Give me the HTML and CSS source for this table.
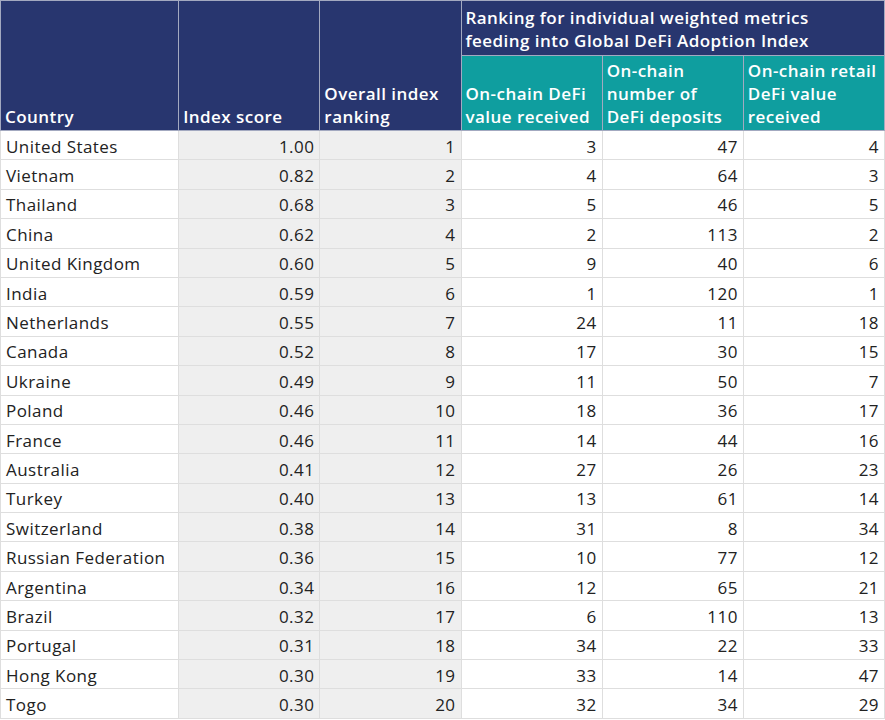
FILE: index.html
```html
<!DOCTYPE html>
<html>
<head>
<meta charset="utf-8">
<link rel="stylesheet" href="styles.css">
</head>
<body>
<table class="defi">
  <colgroup>
    <col class="c-country">
    <col class="c-num"><col class="c-num"><col class="c-num"><col class="c-num"><col class="c-num">
  </colgroup>
  <thead>
    <tr class="h1">
      <th rowspan="2" class="navy left">Country</th>
      <th rowspan="2" class="navy left">Index score</th>
      <th rowspan="2" class="navy left">Overall index<br>ranking</th>
      <th colspan="3" class="navy group">Ranking for individual weighted metrics<br>feeding into Global DeFi Adoption Index</th>
    </tr>
    <tr class="h2">
      <th class="teal">On-chain DeFi<br>value received</th>
      <th class="teal">On-chain<br>number of<br>DeFi deposits</th>
      <th class="teal">On-chain retail<br>DeFi value<br>received</th>
    </tr>
  </thead>
  <tbody>
    <tr><td>United States</td><td class="g">1.00</td><td class="g">1</td><td>3</td><td>47</td><td>4</td></tr>
    <tr><td>Vietnam</td><td class="g">0.82</td><td class="g">2</td><td>4</td><td>64</td><td>3</td></tr>
    <tr><td>Thailand</td><td class="g">0.68</td><td class="g">3</td><td>5</td><td>46</td><td>5</td></tr>
    <tr><td>China</td><td class="g">0.62</td><td class="g">4</td><td>2</td><td>113</td><td>2</td></tr>
    <tr><td>United Kingdom</td><td class="g">0.60</td><td class="g">5</td><td>9</td><td>40</td><td>6</td></tr>
    <tr><td>India</td><td class="g">0.59</td><td class="g">6</td><td>1</td><td>120</td><td>1</td></tr>
    <tr><td>Netherlands</td><td class="g">0.55</td><td class="g">7</td><td>24</td><td>11</td><td>18</td></tr>
    <tr><td>Canada</td><td class="g">0.52</td><td class="g">8</td><td>17</td><td>30</td><td>15</td></tr>
    <tr><td>Ukraine</td><td class="g">0.49</td><td class="g">9</td><td>11</td><td>50</td><td>7</td></tr>
    <tr><td>Poland</td><td class="g">0.46</td><td class="g">10</td><td>18</td><td>36</td><td>17</td></tr>
    <tr><td>France</td><td class="g">0.46</td><td class="g">11</td><td>14</td><td>44</td><td>16</td></tr>
    <tr><td>Australia</td><td class="g">0.41</td><td class="g">12</td><td>27</td><td>26</td><td>23</td></tr>
    <tr><td>Turkey</td><td class="g">0.40</td><td class="g">13</td><td>13</td><td>61</td><td>14</td></tr>
    <tr><td>Switzerland</td><td class="g">0.38</td><td class="g">14</td><td>31</td><td>8</td><td>34</td></tr>
    <tr><td>Russian Federation</td><td class="g">0.36</td><td class="g">15</td><td>10</td><td>77</td><td>12</td></tr>
    <tr><td>Argentina</td><td class="g">0.34</td><td class="g">16</td><td>12</td><td>65</td><td>21</td></tr>
    <tr><td>Brazil</td><td class="g">0.32</td><td class="g">17</td><td>6</td><td>110</td><td>13</td></tr>
    <tr><td>Portugal</td><td class="g">0.31</td><td class="g">18</td><td>34</td><td>22</td><td>33</td></tr>
    <tr><td>Hong Kong</td><td class="g">0.30</td><td class="g">19</td><td>33</td><td>14</td><td>47</td></tr>
    <tr><td>Togo</td><td class="g">0.30</td><td class="g">20</td><td>32</td><td>34</td><td>29</td></tr>
  </tbody>
</table>
</body>
</html>
```

FILE: styles.css
```css
html, body {
  margin: 0;
  padding: 0;
  background: #ffffff;
}

.defi {
  border-collapse: collapse;
  table-layout: fixed;
  width: 885px;
  font-family: "Open Sans", "Noto Sans", sans-serif;
  font-size: 17px;
  letter-spacing: 0.45px;
  color: #222222;
}

.c-country { width: 178px; }
.c-num { width: 141px; }

.defi th {
  font-weight: 600;
  color: #ffffff;
  text-align: left;
  vertical-align: bottom;
  line-height: 23px;
  padding: 0 2px 2px 4px;
  border: 1px solid #a3a9c0;
  white-space: nowrap;
  overflow: hidden;
}

.navy { background: #28366f; }
.teal { background: #0f9e9f; }

.h1 { height: 55px; }
.h1 .group {
  vertical-align: top;
  padding-top: 5px;
}
.h2 { height: 75px; }

.defi td {
  height: 29.4px;
  padding: 3px 5px 0 5px;
  border: 1px solid #dedede;
  text-align: right;
  vertical-align: middle;
  line-height: 20px;
  white-space: nowrap;
  box-sizing: border-box;
}

.defi td:first-child { text-align: left; }
.defi td.g { background: #efefef; }
```
